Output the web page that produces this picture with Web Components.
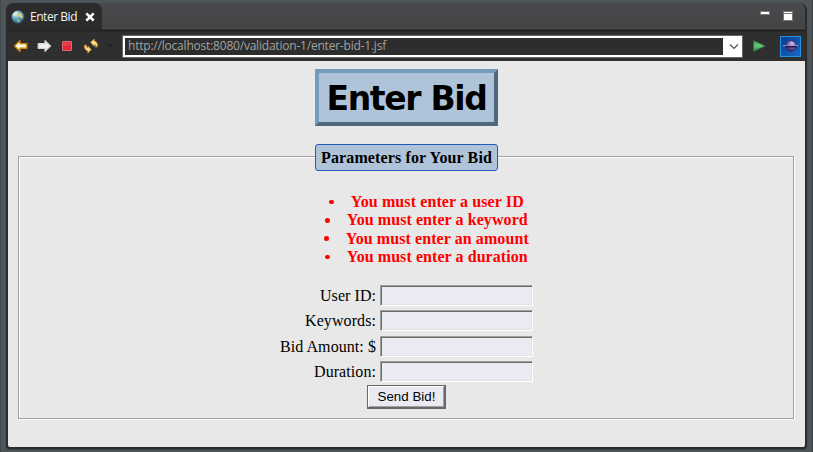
<!DOCTYPE html>
<html lang="en">
<head>
<meta charset="utf-8">
<title>Enter Bid</title>
<style>
html, body { margin: 0; height: 100%; overflow: hidden; }
body { background: #4e5558; }
</style>
</head>
<body>
<browser-window>
  <window-tabs slot="tabs"><text-run w="47">Enter Bid</text-run></window-tabs>
  <nav-toolbar slot="toolbar"><text-run w="258">http://localhost:8080/validation-1/enter-bid-1.jsf</text-run></nav-toolbar>
  <page-title><text-run w="160">Enter Bid</text-run></page-title>
  <group-box>
    <text-run slot="legend" w="171">Parameters for Your Bid</text-run>
    <error-list>
      <error-item><text-run w="173">You must enter a user ID</text-run></error-item>
      <error-item><text-run w="181">You must enter a keyword</text-run></error-item>
      <error-item><text-run w="183">You must enter an amount</text-run></error-item>
      <error-item><text-run w="181">You must enter a duration</text-run></error-item>
    </error-list>
    <bid-form>
      <form-row><text-run w="56">User ID:</text-run></form-row>
      <form-row><text-run w="71">Keywords:</text-run></form-row>
      <form-row><text-run w="96">Bid Amount: $</text-run></form-row>
      <form-row><text-run w="62">Duration:</text-run></form-row>
    </bid-form>
    <send-button><text-run w="58">Send Bid!</text-run></send-button>
  </group-box>
</browser-window>
<script>
function define(name, html, after) {
  const t = document.createElement('template');
  t.innerHTML = html;
  customElements.define(name, class extends HTMLElement {
    constructor() {
      super();
      this.attachShadow({ mode: 'open' }).append(t.content.cloneNode(true));
    }
    connectedCallback() { if (after) after(this); }
  });
}

define('browser-window', `
<style>
:host { display: block; box-sizing: border-box; width: 813px; height: 452px; padding: 3px 6px;
  background: linear-gradient(90deg, #434a4d 0 1px, #4e5558 1px 812px, #3a4043 812px); }
.frame { height: 446px; box-sizing: border-box; display: flex; flex-direction: column; background: #2a2a2a;
  border: solid #2b2b2b; border-width: 0 2px 2px; border-radius: 7px 7px 4px 4px; overflow: hidden; box-shadow: 0 1px 1px #3b4144; }
main { flex: 1; display: flex; flex-direction: column; align-items: center; background: #e8e8e8; padding: 8px 11px 0 10px;
  font-family: "Liberation Serif", serif; font-size: 16px; color: #000; }
</style>
<div class="frame"><slot name="tabs"></slot><slot name="toolbar"></slot><main><slot></slot></main></div>`);

define('window-tabs', `
<style>
:host { display: flex; justify-content: space-between; height: 26px; margin: 0 -2px; flex: none;
  background: linear-gradient(#494a4d, #424344); font: 12px/16px "Open Sans", "Noto Sans", sans-serif; color: #f4f4f4; }
.tab { display: flex; align-items: center; box-sizing: border-box; width: 96px; background: #2b2b2b; border-radius: 7px 7px 0 0; padding: 2px 0 0 5px; }
slot { display: block; }
.x { margin-left: 6px; }
.name { margin-left: 5px; width: 49px; }
.ctl { display: flex; align-items: flex-start; gap: 13px; padding: 8px 14px 0 0; flex: 1; justify-content: flex-end; border-bottom: 1px solid #50504d; }
.min { width: 8px; height: 2px; background: #fff; border: 1px solid #777872; }
.max { width: 8px; height: 8px; background: linear-gradient(#fff 0 1px, #777 1px 2px, #fff 2px); border: 1px solid #777872; }
</style>
<div class="tab">
<svg width="14" height="14" viewBox="0 0 14 14"><defs><radialGradient id="g" cx=".35" cy=".3" r=".75"><stop offset="0" stop-color="#d9edf2"/><stop offset=".5" stop-color="#5e9cb7"/><stop offset="1" stop-color="#17527f"/></radialGradient></defs>
<circle cx="7" cy="7" r="6.500" fill="url(#g)"/><path d="M2 4.500l2-2.300 2.500-.4-.5 1.800-2 1.400-1 1.500z" fill="#e3efdc"/><path d="M7.500 2.500l3 1 1.500 3-1.500 2.500-1.500-2-2-1z" fill="#d8cf7c"/><path d="M6 9l2.500.5.5 1.500L7.500 12.800 6 11z" fill="#a4ba6a"/></svg>
<span class="name"><slot></slot></span>
<svg class="x" width="10" height="10" viewBox="0 0 10 10"><path d="M1.300 1.300l7.400 7.400M8.700 1.300L1.300 8.700" stroke="#fff" stroke-width="2.600"/></svg>
</div>
<div class="ctl"><i class="min"></i><i class="max"></i></div>`);

define('nav-toolbar', `
<style>
:host { display: flex; align-items: flex-start; height: 32px; flex: none; box-sizing: border-box; padding: 3px 0 0 5px; background: #2f2f2f;
  font: 12px/16px "Open Sans", "Noto Sans", sans-serif; color: #a2a2a2; border-top: 3px solid #282828; }
svg { display: block; flex: none; }
.ico { margin-top: 3px; }
.url { box-sizing: border-box; flex: none; width: 621px; height: 23px; margin: 0 0 0 8px; border: 1px solid #666; background: #fff; padding: 2px; display: flex; }
.field { flex: none; width: 598px; height: 17px; background: #2d2d2d; padding-left: 3px; box-sizing: border-box; }
.field slot { display: block; }
.chev { margin: 5px 0 0 6px; }
.go { margin: 5px 0 0 10px; }
.ball { margin: 1px 0 0 14px; }
</style>
<svg class="ico" width="16" height="16" viewBox="0 0 16 16"><path d="M1.500 8L7 2.700v3h6.800v4.600H7v3z" fill="#fff3cd" stroke="#c98413" stroke-width="1.400" stroke-linejoin="round"/><path d="M3 8l3-2.500v1.800h6.500" fill="none" stroke="#fffbe9"/></svg>
<svg class="ico" style="margin-left:7px" width="16" height="16" viewBox="0 0 16 16"><path d="M14.500 8L9 2.700v3H2.200v4.600H9v3z" fill="#f1f1f1" stroke="#d4d4d4" stroke-width="1.200" stroke-linejoin="round"/></svg>
<svg class="ico" style="margin-left:7px" width="16" height="16" viewBox="0 0 16 16"><rect x="3.500" y="3.500" width="9" height="9" rx=".5" fill="#e0283a" stroke="#e06c70"/><path d="M4.500 8V4.500h7V7z" fill="#e63f4c"/></svg>
<svg class="ico" style="margin-left:8px" width="16" height="16" viewBox="0 0 16 16"><g fill="#f9dc8c" stroke="#c58422" stroke-width=".8" stroke-linejoin="round"><path d="M7.500 4.300L11.200 1v1.800q3.200.8 3.500 4.800l-1.700 1.900q-.1-2.900-1.800-3.100v2z"/><path d="M8.200 11.500L4.800 15.200v-2.100Q1.600 12 1.100 8.200l1.800-1.800q.2 3 1.900 3.300V8z"/></g></svg>
<svg width="8" height="5" style="margin:9px 0 0 7px" viewBox="0 0 8 5"><path d="M0 0h8L4 4z" fill="#242424"/></svg>
<div class="url"><div class="field"><slot></slot></div><svg class="chev" width="10" height="8" viewBox="0 0 10 8"><path d="M1 1.500L5 5.500 9 1.500" fill="none" stroke="#505050" stroke-width="1.200"/></svg></div>
<svg class="go" width="13" height="12" viewBox="0 0 13 12"><defs><linearGradient id="p" x2="0" y2="1"><stop stop-color="#3ba355"/><stop offset=".5" stop-color="#6bc878"/><stop offset="1" stop-color="#258144"/></linearGradient></defs><path d="M.7.700L12 6 .7 11.300z" fill="url(#p)" stroke="#2c8149" stroke-width=".8"/></svg>
<svg class="ball" width="21" height="21" viewBox="0 0 21 21"><defs><linearGradient id="b" x2="1" y2="1"><stop stop-color="#0b3c8c"/><stop offset="1" stop-color="#1769c4"/></linearGradient><radialGradient id="s" cx=".6" cy=".25" r=".8"><stop stop-color="#d5c5ea"/><stop offset=".5" stop-color="#76609f"/><stop offset="1" stop-color="#281b5a"/></radialGradient></defs><rect x=".5" y=".5" width="20" height="20" fill="url(#b)" stroke="#2792e3"/><circle cx="11" cy="10" r="5.300" fill="url(#s)" stroke="#33246c" stroke-width=".8"/><path d="M3 9.700h15" stroke="#a498d8" stroke-width="1.100"/><path d="M5.500 10.800h11" stroke="#20144c" stroke-width="1.400"/></svg>`);

define('page-title', `
<style>
:host { display: flex; justify-content: center; align-items: center; box-sizing: border-box; width: 183px; height: 57px; flex: none; margin-left: 1px;
  background: #b0c4d9; border: 4px solid; border-color: #769cbd #4e6880 #4e6880 #769cbd; }
h1 { margin: 2px 0 0; font: bold 33px/38px "DejaVu Sans", sans-serif; }
</style><h1><slot></slot></h1>`);

define('group-box', `
<style>
:host { display: block; align-self: stretch; margin-top: 18px; }
fieldset { margin: 0; padding: 0; box-sizing: border-box; height: 275px; border: 1px solid #a0a0a0; box-shadow: 1px 1px #fff, inset 1px 1px #fff; min-width: 0; }
legend { height: 25px; margin: 0 0 0 296px; padding: 0; }
.tag { box-sizing: border-box; width: 183px; height: 27px; display: flex; justify-content: center; align-items: center;
  background: #b0c4d9; border: 1px solid #2458bd; border-radius: 3px; font-weight: bold; line-height: 18px; }
.body { display: flex; flex-direction: column; align-items: center; padding-top: 24px; }
</style>
<fieldset><legend><div class="tag"><slot name="legend"></slot></div></legend><div class="body"><slot></slot></div></fieldset>`);

define('error-list', `
<style>:host { display: flex; flex-direction: column; align-items: center; color: #f00; font-weight: bold; line-height: 18.300px; margin-left: 62px; }</style>
<slot></slot>`);

define('error-item', `
<style>
:host { display: flex; align-items: center; gap: 17px; margin-left: -21px; }
i { width: 4.600px; height: 4.600px; border-radius: 50%; background: #f00; }
</style><i></i><slot></slot>`);

define('bid-form', `
<style>:host { display: grid; row-gap: 4px; margin-top: 18.800px; width: 254px; }</style>
<slot></slot>`);

define('form-row', `
<style>
:host { display: flex; justify-content: flex-end; align-items: center; gap: 4px; height: 21.300px; }
slot { display: block; padding-top: 1px; }
input { box-sizing: border-box; width: 153px; height: 21px; margin: 0; padding: 0; border: 1px solid; border-color: #a0a0a0 #fff #fff #a0a0a0;
  background: #eaebf2; box-shadow: inset 1px 1px #696969, inset -1px -1px #e3e3e3; outline: 0; }
</style><slot></slot><input type="text">`);

define('send-button', `
<style>
:host { display: block; margin: 3px 0 0 1px; }
button { display: flex; align-items: center; justify-content: center; box-sizing: border-box; width: 79px; height: 24px; padding: 0 0 1px; margin: 0;
  font: 13.333px/16px "Liberation Sans", sans-serif; color: #000; background: #eaebf2; border: 1px solid #696969; border-radius: 0;
  box-shadow: inset -1px -1px #696969, inset 1px 1px #fff, inset -2px -2px #a0a0a0; }
</style><button type="button"><slot></slot></button>`);

/* Spreads its text over the advance width given in the "w" attribute. */
define('text-run', `
<style>:host { display: inline-block; white-space: nowrap; }</style><slot></slot>`, el => {
  const n = el.textContent.length;
  const free = el.getBoundingClientRect().width;
  const gap = (Number(el.getAttribute('w')) - free) / n;
  el.style.letterSpacing = gap.toFixed(3) + 'px';
});
</script>
</body>
</html>
